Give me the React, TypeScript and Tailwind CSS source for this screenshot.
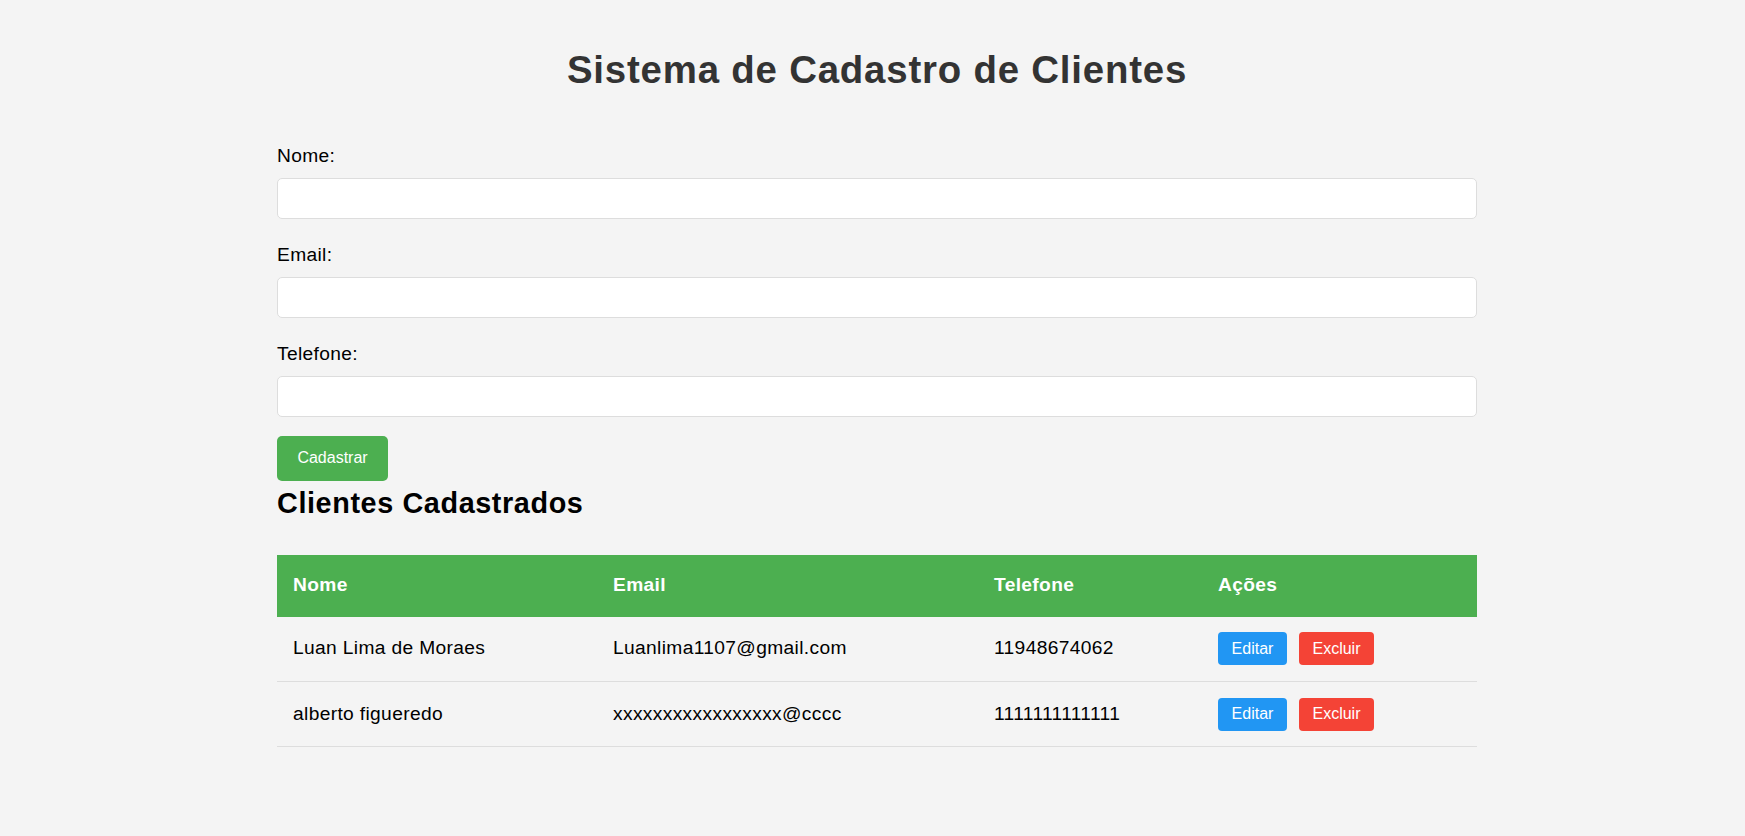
import React from "react";

const CLIENTS = [
  { id: 1, nome: "Luan Lima de Moraes", email: "Luanlima1107@gmail.com", telefone: "11948674062" },
  { id: 2, nome: "alberto figueredo", email: "xxxxxxxxxxxxxxxxx@cccc", telefone: "1111111111111" },
];

const FIELDS = ["Nome:", "Email:", "Telefone:"];

export default function App() {
  return (
    <div className="min-h-screen bg-[#f4f4f4] pl-[9px] font-['Liberation_Sans',Arial,sans-serif] tracking-[0.35px] text-black">
      <div className="mx-auto w-[1200px] pb-[80px]">
        <h1 className="pt-[48px] text-center text-[38.4px] font-bold leading-[44px] tracking-[0.8px] text-[#333]">
          Sistema de Cadastro de Clientes
        </h1>

        <form className="mt-[53px]" onSubmit={(e) => e.preventDefault()}>
          {FIELDS.map((label, i) => (
            <div key={label} className={i > 0 ? "mt-[25px]" : ""}>
              <label className="block text-[19.2px] leading-[22px]">{label}</label>
              <input
                type="text"
                className="mt-[11px] block h-[41px] w-full rounded-[5px] border border-[#ddd] bg-white px-3 text-[19.2px] outline-none"
              />
            </div>
          ))}
          <button
            type="submit"
            className="mt-[18.5px] h-[45px] w-[111px] rounded-[5px] bg-[#4caf50] text-[16px] tracking-normal text-white"
          >
            Cadastrar
          </button>
        </form>

        <h2 className="mt-[6.6px] text-[28.8px] font-bold leading-[33px] tracking-[0.6px]">Clientes Cadastrados</h2>

        <table className="mt-[34.5px] w-full table-fixed border-collapse text-left text-[19.2px]">
          <colgroup>
            <col className="w-[320px]" />
            <col className="w-[381px]" />
            <col className="w-[224px]" />
            <col className="w-[275px]" />
          </colgroup>
          <thead>
            <tr className="h-[62px] bg-[#4caf50] text-white">
              <th className="px-4 font-bold">Nome</th>
              <th className="px-4 font-bold">Email</th>
              <th className="px-4 font-bold">Telefone</th>
              <th className="px-4 font-bold">Ações</th>
            </tr>
          </thead>
          <tbody>
            {CLIENTS.map((c) => (
              <tr key={c.id} className="h-[65px] border-b border-[#ddd]">
                <td className="px-4">{c.nome}</td>
                <td className="px-4">{c.email}</td>
                <td className="px-4">{c.telefone}</td>
                <td className="px-4">
                  <div className="flex items-center gap-3">
                    <button className="h-[33px] w-[69px] rounded-[4px] bg-[#2196f3] text-[16px] tracking-normal text-white">
                      Editar
                    </button>
                    <button className="h-[33px] w-[75px] rounded-[4px] bg-[#f44336] text-[16px] tracking-normal text-white">
                      Excluir
                    </button>
                  </div>
                </td>
              </tr>
            ))}
          </tbody>
        </table>
      </div>
    </div>
  );
}
